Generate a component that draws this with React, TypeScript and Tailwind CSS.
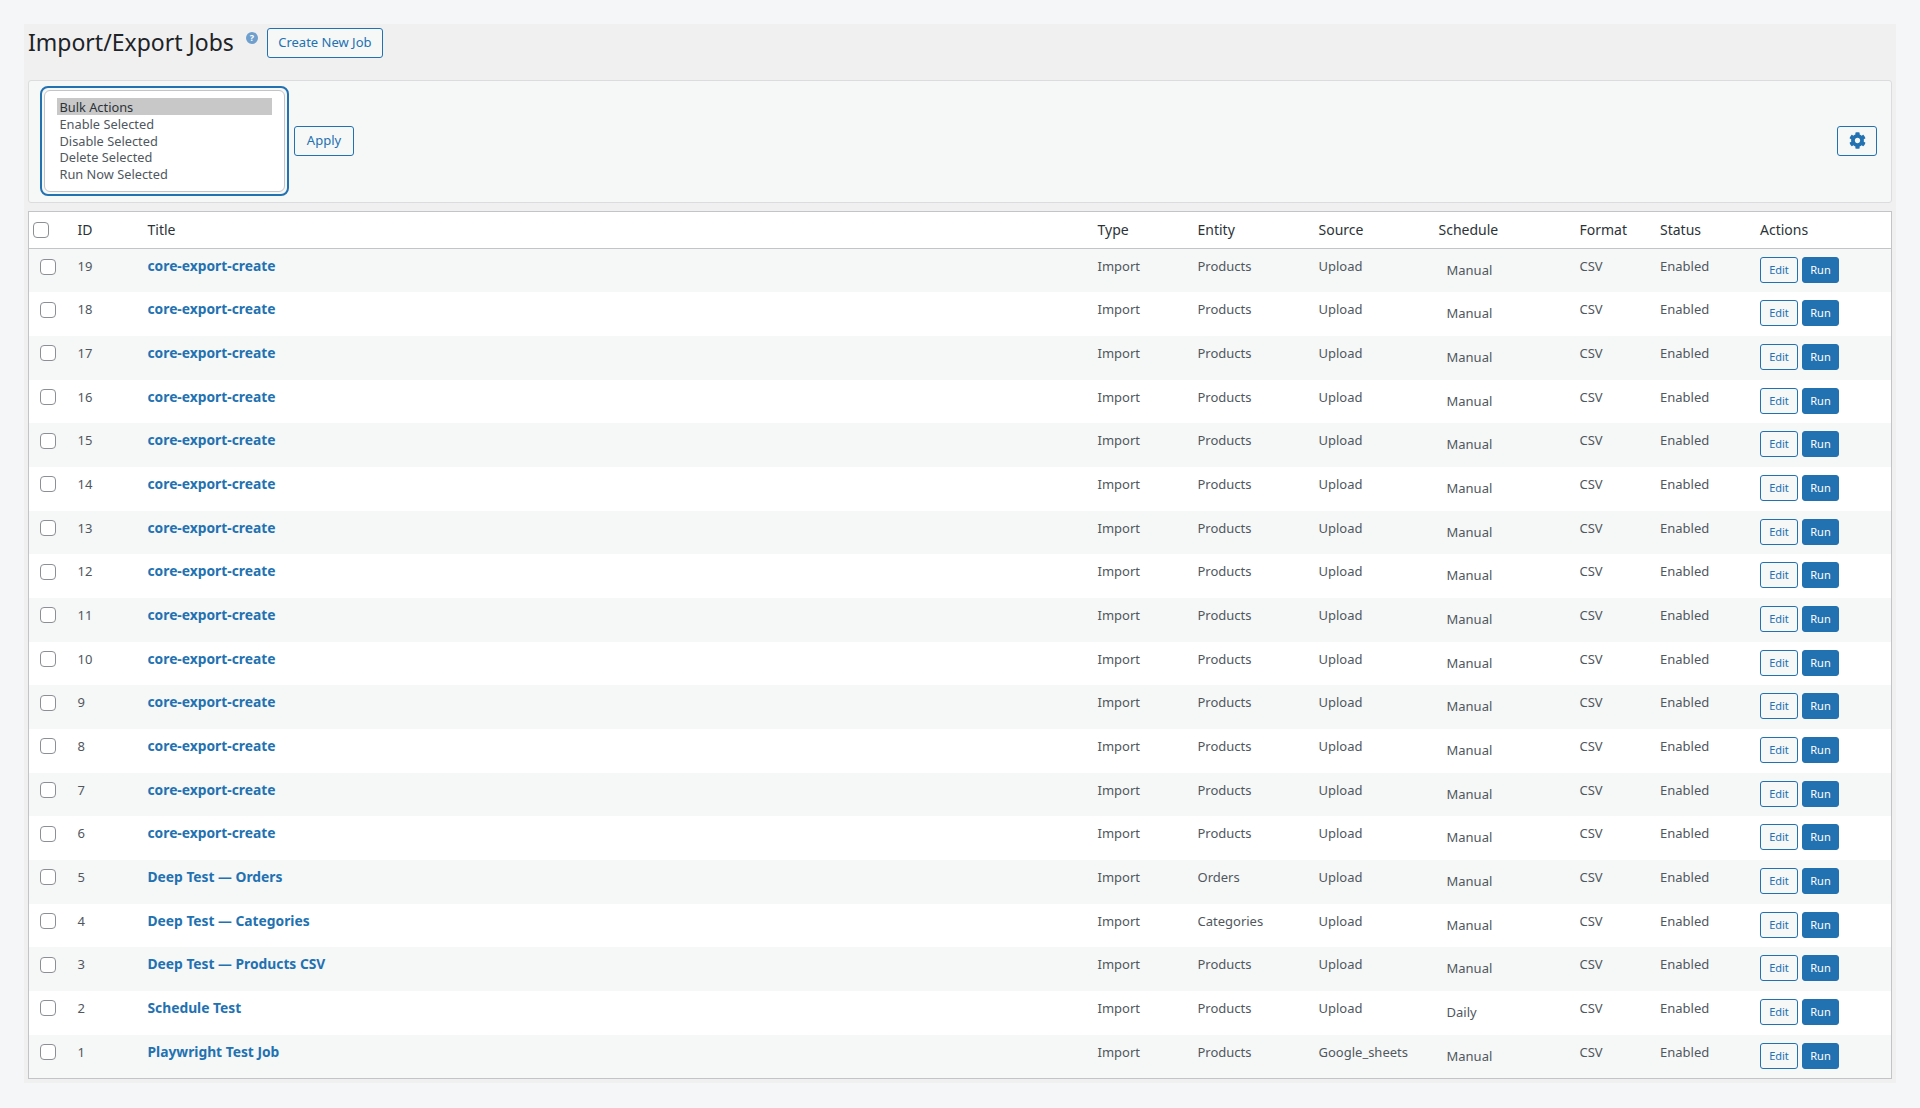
import { FaCog } from "react-icons/fa"

type Job = { id: number; title: string; entity?: string; source?: string; schedule?: string }

const jobs: Job[] = [
  ...[19, 18, 17, 16, 15, 14, 13, 12, 11, 10, 9, 8, 7, 6].map((id) => ({ id, title: "core-export-create" })),
  { id: 5, title: "Deep Test — Orders", entity: "Orders" },
  { id: 4, title: "Deep Test — Categories", entity: "Categories" },
  { id: 3, title: "Deep Test — Products CSV" },
  { id: 2, title: "Schedule Test", schedule: "Daily" },
  { id: 1, title: "Playwright Test Job", source: "Google_sheets" },
]

const columns = [
  { label: "ID", width: "w-[70px]" },
  { label: "Title", width: "w-[950px]" },
  { label: "Type", width: "w-[100px]" },
  { label: "Entity", width: "w-[121px]" },
  { label: "Source", width: "w-[120px]" },
  { label: "Schedule", width: "w-[141px]" },
  { label: "Format", width: "w-[80.5px]" },
  { label: "Status", width: "w-[100px]" },
  { label: "Actions", width: "" },
]

function Checkbox({ className = "" }: { className?: string }) {
  return (
    <input
      type="checkbox"
      className={`block size-4 appearance-none rounded-[4px] border border-[#8c8f94] bg-white ${className}`}
    />
  )
}

function JobRow({ job, striped }: { job: Job; striped: boolean }) {
  return (
    <tr className={`h-[43.68px] align-top text-[13px] leading-[18px] text-[#50575e] ${striped ? "bg-[#f6f7f7]" : "bg-white"}`}>
      <td className="pt-[9.5px] pl-[11px]">
        <Checkbox />
      </td>
      <td className="pt-2 pl-2.5">{job.id}</td>
      <td className="pt-2 pl-2.5">
        <a className="text-[13.8px] font-bold text-[#2271b1]">{job.title}</a>
      </td>
      <td className="pt-2 pl-2.5">Import</td>
      <td className="pt-2 pl-2.5">{job.entity ?? "Products"}</td>
      <td className="pt-2 pl-2.5">{job.source ?? "Upload"}</td>
      <td className="pt-3 pl-[18px]">{job.schedule ?? "Manual"}</td>
      <td className="pt-2 pl-2.5">CSV</td>
      <td className="pt-2 pl-2.5">Enabled</td>
      <td className="pt-2 pl-2.5">
        <div className="flex gap-1">
          <button className="h-[26px] w-[38px] rounded-[3px] border border-[#2271b1] bg-[#f6f7f7] text-[11px] text-[#2271b1]">Edit</button>
          <button className="h-[26px] w-[37px] rounded-[3px] border border-[#2271b1] bg-[#2271b1] text-[11px] text-white">Run</button>
        </div>
      </td>
    </tr>
  )
}

export default function App() {
  return (
    <div className="min-h-screen bg-[#f5f6f8] p-6 font-['Noto_Sans',sans-serif]">
      <div className="bg-[#f0f0f1] px-1 pt-1 pb-1">
        {/* Heading */}
        <div className="flex h-[52px] items-start">
          <h1 className="-mt-px text-[23px] leading-[30px] text-[#1d2327]">Import/Export Jobs</h1>
          <span className="mt-1 ml-3 flex size-[12px] items-center justify-center rounded-full bg-[#6f9fcd] text-[9px] font-bold text-white">?</span>
          <button className="ml-[9px] h-[30px] w-[116px] rounded-[3px] border border-[#2271b1] bg-[#f6f7f7] text-[13px] text-[#2271b1]">Create New Job</button>
        </div>

        {/* Bulk actions */}
        <div className="flex h-[123px] items-center rounded-[3px] border border-[#dcdcde] bg-[#f6f7f7] pr-[14px] pb-0.5 pl-[11px]">
          <div className="rounded-lg border-2 border-[#2271b1] p-0.5">
            <select
              multiple
              size={5}
              defaultValue={["bulk"]}
              className="block h-[102px] w-[241px] overflow-hidden rounded-md border border-[#c3c4c7] bg-white px-3 py-[7.5px] text-[12.8px] text-[#50575e] outline-none"
            >
              <option value="bulk" className="h-[17px] min-h-0 py-0 pl-[2.5px] leading-[17px] bg-[#c8c8c8] text-[#2c3338]">Bulk Actions</option>
              <option className="h-[16.5px] min-h-0 py-0 pl-[2.5px] leading-[16.5px]">Enable Selected</option>
              <option className="h-[16.5px] min-h-0 py-0 pl-[2.5px] leading-[16.5px]">Disable Selected</option>
              <option className="h-[16.5px] min-h-0 py-0 pl-[2.5px] leading-[16.5px]">Delete Selected</option>
              <option className="h-[16.5px] min-h-0 py-0 pl-[2.5px] leading-[16.5px]">Run Now Selected</option>
            </select>
          </div>
          <button className="ml-[5px] h-[30px] w-[60px] rounded-[3px] border border-[#2271b1] bg-[#f6f7f7] text-[13px] text-[#2271b1]">Apply</button>
          <button className="ml-auto flex h-[30px] w-[40px] items-center justify-center rounded-[3px] border border-[#2271b1] bg-[#f6f7f7] text-[#2271b1]">
            <FaCog className="size-[17px]" />
          </button>
        </div>

        {/* Jobs */}
        <table className="mt-2 w-full table-fixed border border-[#c3c4c7] bg-white">
          <thead>
            <tr className="h-[37px] border-b border-[#c3c4c7] text-left text-[14px] text-[#2c3338]">
              <th className="w-[39px] pl-1">
                <Checkbox />
              </th>
              {columns.map((col) => (
                <th key={col.label} className={`pb-0.5 pl-2.5 font-normal ${col.width}`}>
                  {col.label}
                </th>
              ))}
            </tr>
          </thead>
          <tbody>
            {jobs.map((job, i) => (
              <JobRow key={job.id} job={job} striped={i % 2 === 0} />
            ))}
          </tbody>
        </table>
      </div>
    </div>
  )
}
